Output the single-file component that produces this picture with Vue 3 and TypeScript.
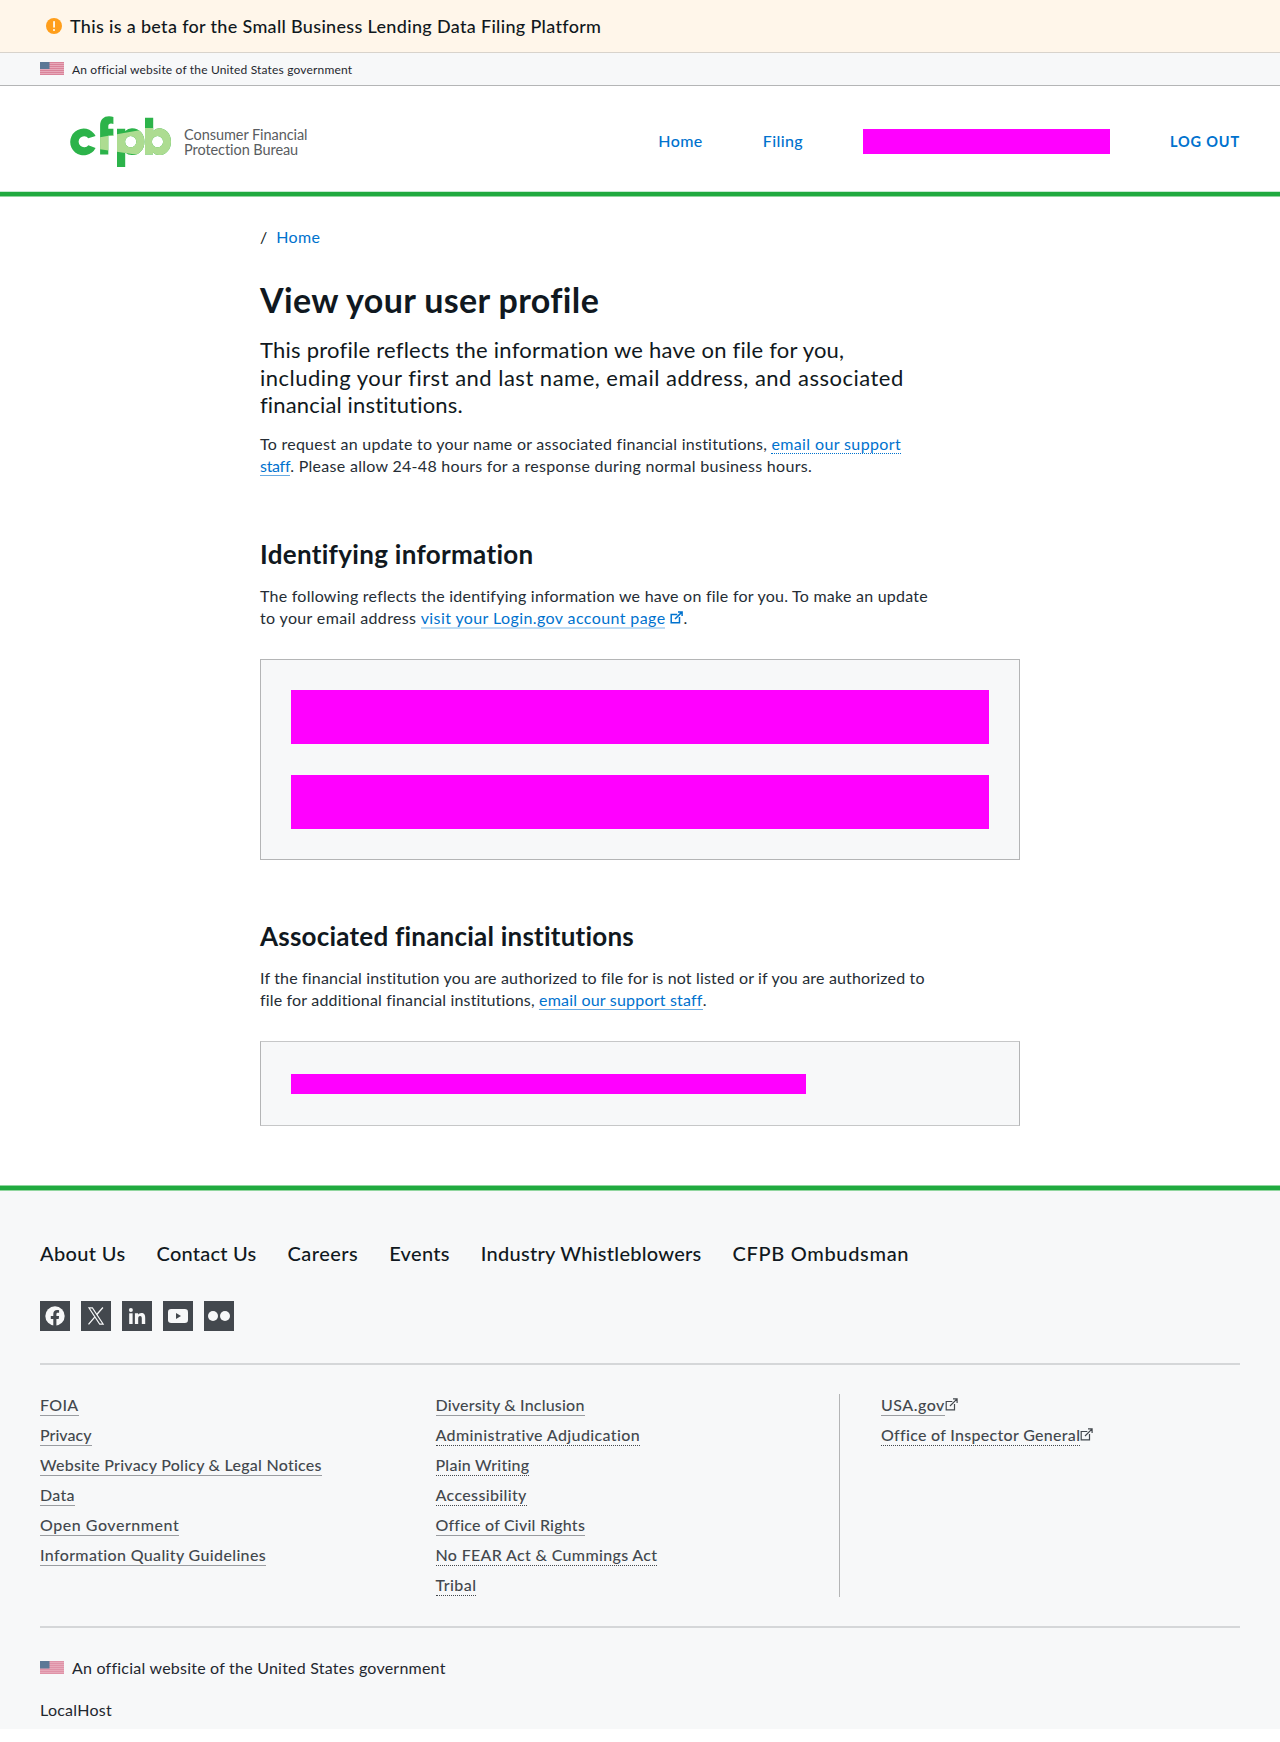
<script setup lang="ts">
interface Item {
  label: string
  track: number
  soft?: boolean
}

interface Column {
  name: string
  external?: boolean
  links: Item[]
}

const spacing = (track: number) => ({ letterSpacing: `${track}px` })

const lead: Item[] = [
  { label: 'This profile reflects the information we have on file for you,', track: 0.24 },
  { label: 'including your first and last name, email address, and associated', track: 0.49 },
  { label: 'financial institutions.', track: 0.16 },
]

const footerNav: Item[] = [
  { label: 'About Us', track: 0.36 },
  { label: 'Contact Us', track: 0.24 },
  { label: 'Careers', track: 0.46 },
  { label: 'Events', track: 0.3 },
  { label: 'Industry Whistleblowers', track: 0.27 },
  { label: 'CFPB Ombudsman', track: 0.67 },
]

const columns: Column[] = [
  {
    name: 'policies',
    links: [
      { label: 'FOIA', track: 0.32, soft: true },
      { label: 'Privacy', track: 0.02, soft: true },
      { label: 'Website Privacy Policy & Legal Notices', track: 0.245, soft: true },
      { label: 'Data', track: 0.27, soft: true },
      { label: 'Open Government', track: 0.53, soft: true },
      { label: 'Information Quality Guidelines', track: 0.35, soft: true },
    ],
  },
  {
    name: 'compliance',
    links: [
      { label: 'Diversity & Inclusion', track: 0.19, soft: true },
      { label: 'Administrative Adjudication', track: 0.37 },
      { label: 'Plain Writing', track: 0.23 },
      { label: 'Accessibility', track: 0.35 },
      { label: 'Office of Civil Rights', track: 0.22, soft: true },
      { label: 'No FEAR Act & Cummings Act', track: 0.33 },
      { label: 'Tribal', track: 0.44 },
    ],
  },
  {
    name: 'government',
    external: true,
    links: [
      { label: 'USA.gov', track: 0.5, soft: true },
      { label: 'Office of Inspector General', track: 0.3 },
    ],
  },
]

const stripes = [0, 2, 4, 6, 8, 10, 12]
</script>

<template>
  <div class="page">
    <div class="beta">
      <svg class="beta-icon" viewBox="0 0 16 16" aria-hidden="true">
        <circle cx="8" cy="8" r="8" fill="#ff9e1b" />
        <rect x="7.2" y="3" width="1.7" height="6.8" rx=".8" fill="#fff" />
        <circle cx="8" cy="12.1" r="1" fill="#fff" />
      </svg>
      <span>This is a beta for the Small Business Lending Data Filing Platform</span>
    </div>

    <div class="gov gov-top">
      <svg class="flag" viewBox="0 0 24 13" aria-hidden="true">
        <rect width="24" height="13" fill="#e7a9ba" />
        <rect v-for="y in stripes" :key="y" :y="y" width="24" height="1" fill="#d98399" />
        <rect width="9.5" height="7" fill="#5c7896" />
      </svg>
      <span>An official website of the United States government</span>
    </div>

    <header class="header">
      <a class="brand" aria-label="Consumer Financial Protection Bureau">
        <svg class="mark" viewBox="0 0 102 52" aria-hidden="true">
          <defs>
            <clipPath id="beam">
              <path d="M30 21.3 75 13.2V12h27v28H75.500L30 33.300z" />
            </clipPath>
            <g id="shapes">
              <path
                d="M38.300 38.500h-8.200V10C30.100 3.600 33.600.3 39 .3c1.700 0 3.100.2 4.400.7v6.900c-.8-.3-1.500-.5-2.300-.5-1.900 0-2.800.9-2.800 2.800v2.600h5.100v6.900h-5.100z"
              />
              <path
                fill-rule="evenodd"
                d="M47 12.800h8.200v2.300a9.500 9.500 0 0 1 7-2.800c7 0 12.300 5.600 12.300 13.400S69.200 39.100 62.200 39.100a9.500 9.500 0 0 1-7-2.600v14.400H47zM60.700 20.100a5.500 5.500 0 1 0 0 11.200 5.500 5.500 0 0 0 0-11.200z"
              />
              <path
                fill-rule="evenodd"
                d="M75 1.700h8.200v13.200a9.600 9.600 0 0 1 5.700-2.600c7 0 12.100 5.600 12.100 13.400s-5.100 13.400-12.100 13.400a9 9 0 0 1-5.900-2.700v2.100h-8zM87.500 20.100a5.500 5.500 0 1 0 0 11.200 5.500 5.500 0 0 0 0-11.200z"
              />
            </g>
          </defs>
          <path
            fill="#2cb34a"
            d="M25.600 20 18.300 22.200a5.500 5.500 0 1 0 .1 7l7.200 2.700A13.400 13.400 0 1 1 25.600 20z"
          />
          <use href="#shapes" fill="#2cb34a" />
          <use href="#shapes" fill="#addc91" clip-path="url(#beam)" />
        </svg>
        <span class="brand-text">
          <span class="brand-one">Consumer Financial</span>
          <span class="brand-two">Protection Bureau</span>
        </span>
      </a>
      <nav class="nav">
        <a>Home</a>
        <a>Filing</a>
        <span class="mask nav-mask"></span>
        <a class="logout">LOG OUT</a>
      </nav>
    </header>

    <main class="main">
      <div class="crumbs"><span>/</span><a>Home</a></div>

      <h1>View your user profile</h1>
      <p class="lead">
        <span v-for="line in lead" :key="line.label" :style="spacing(line.track)">{{ line.label }}</span>
      </p>
      <p class="copy after-lead">
        To request an update to your name or associated financial institutions,
        <a class="link wide">email our support</a><br />
        <a class="link soft tight">staff</a><span class="hours">. Please allow 24-48 hours for a response during normal business hours.</span>
      </p>

      <h2 class="first">Identifying information</h2>
      <p class="copy identity">
        The following reflects the identifying information we have on file for you. To make an update<br />
        <span class="address">to your email address</span>&#32;<a class="link faint">visit your Login.gov account page</a>
        <svg class="out" viewBox="0 0 13 13" aria-hidden="true">
          <path d="M7.300 3.500H1.200v8.300h8.300V6M8 .9h4.100V5M11.900 1.100 5 8" />
        </svg>.
      </p>
      <section class="well">
        <div class="mask row"></div>
        <div class="mask row"></div>
      </section>

      <h2 class="second">Associated financial institutions</h2>
      <p class="copy institutions">
        If the financial institution you are authorized to file for is not listed or if you are authorized to<br />
        file for additional financial institutions, <a class="link soft staff">email our support staff</a>.
      </p>
      <section class="well short">
        <div class="mask entry"></div>
      </section>
    </main>

    <footer class="footer">
      <nav class="footer-nav">
        <a v-for="item in footerNav" :key="item.label" :style="spacing(item.track)">{{ item.label }}</a>
      </nav>

      <div class="social">
        <svg viewBox="0 0 30 30" aria-label="Facebook">
          <rect width="30" height="30" fill="#43484e" />
          <circle cx="15" cy="15" r="9.700" fill="#f7f8f9" />
          <path
            fill="#43484e"
            d="M13.300 25v-6.900h-2.500v-3h2.500v-2.200c0-2.600 1.500-3.900 3.800-3.900 1 0 2 .2 2 .2v2.500h-1.200c-1.200 0-1.500.7-1.500 1.500v1.900h2.700l-.4 3h-2.300V25z"
          />
        </svg>
        <svg viewBox="0 0 30 30" aria-label="X">
          <rect width="30" height="30" fill="#43484e" />
          <g fill="none" stroke="#f7f8f9">
            <path stroke-width="1.100" d="M7.900 6.900h3.500l10.800 16.200h-3.500z" />
            <path stroke-width="1.300" d="m21.900 6.500-6.300 7.200M13.700 16.200l-6.200 7.200" />
          </g>
        </svg>
        <svg viewBox="0 0 30 30" aria-label="LinkedIn">
          <rect width="30" height="30" fill="#43484e" />
          <g fill="#f7f8f9">
            <circle cx="8.900" cy="9" r="2" />
            <rect x="7.200" y="12.300" width="3.400" height="10.700" />
            <path
              d="M12.900 12.300h3.200v1.500c.6-1 1.700-1.800 3.200-1.800 3 0 3.900 1.900 3.900 4.900V23h-3.400v-5.400c0-1.500-.2-2.700-1.700-2.700s-1.900 1.200-1.900 2.700V23h-3.300z"
            />
          </g>
        </svg>
        <svg viewBox="0 0 30 30" aria-label="YouTube">
          <rect width="30" height="30" fill="#43484e" />
          <rect x="5" y="8" width="20" height="14" rx="3.200" fill="#f7f8f9" />
          <path d="M13 12v6l5-3z" fill="#43484e" />
        </svg>
        <svg viewBox="0 0 30 30" aria-label="Flickr">
          <rect width="30" height="30" fill="#43484e" />
          <circle cx="9" cy="15" r="5" fill="#f7f8f9" />
          <circle cx="21" cy="15" r="5" fill="#f7f8f9" />
        </svg>
      </div>

      <div class="columns">
        <ul v-for="column in columns" :key="column.name" :class="column.name">
          <li v-for="item in column.links" :key="item.label">
            <a :class="{ soft: item.soft }" :style="spacing(item.track)">{{ item.label }}</a>
            <svg v-if="column.external" class="out" viewBox="0 0 13 13" aria-hidden="true">
              <path d="M7.300 3.500H1.200v8.300h8.300V6M8 .9h4.100V5M11.900 1.100 5 8" />
            </svg>
          </li>
        </ul>
      </div>

      <div class="gov gov-bottom">
        <svg class="flag" viewBox="0 0 24 13" aria-hidden="true">
          <rect width="24" height="13" fill="#e7a9ba" />
          <rect v-for="y in stripes" :key="y" :y="y" width="24" height="1" fill="#df92a7" />
          <rect width="9.5" height="7.500" fill="#5c7896" />
        </svg>
        <span>An official website of the United States government</span>
      </div>
      <div class="host">LocalHost</div>
    </footer>
  </div>
</template>

<style>
body {
  background: #fff;
}
</style>

<style scoped>
.page {
  font-family: Lato, "Open Sans", sans-serif;
  font-size: 16px;
  line-height: 22px;
  color: #101820;
}

h1,
h2,
p,
ul {
  margin: 0;
  padding: 0;
}

.beta {
  display: flex;
  align-items: center;
  gap: 8.500px;
  height: 52px;
  padding-left: 45.500px;
  border-bottom: 1px solid #d8d3cc;
  background: #fff6ea;
  font-size: 18px;
  font-weight: 500;
  letter-spacing: 0.325px;
}

.beta-icon {
  width: 16px;
  height: 16px;
}

.gov {
  display: flex;
  gap: 8px;
}

.gov-top {
  align-items: center;
  height: 32px;
  padding-left: 40px;
  border-bottom: 1px solid #b4b5b6;
  background: #f7f8f9;
  color: #1f272f;
  font-size: 12px;
  letter-spacing: 0.168px;
}

.gov-top span {
  padding-top: 2px;
}

.flag {
  flex: none;
  width: 24px;
  height: 13px;
}

.gov-top .flag {
  margin-top: -1px;
}

.header {
  display: flex;
  justify-content: space-between;
  height: 105px;
  padding: 0 40px 5px 70px;
  border-bottom: 1px solid #90d69f;
  background: linear-gradient(#c4ead0, #c4ead0) bottom 4px left / 100% 1px no-repeat,
    linear-gradient(#20aa3f, #20aa3f) bottom / 100% 4px no-repeat;
}

.brand {
  display: flex;
  gap: 12px;
  padding-top: 30px;
}

.mark {
  width: 102px;
  height: 52px;
}

.brand-text {
  display: flex;
  flex-direction: column;
  padding-top: 12px;
  color: #5a5d61;
  font-size: 14.500px;
  line-height: 14.500px;
}

.brand-one {
  letter-spacing: -0.06px;
}

.brand-two {
  letter-spacing: -0.07px;
}

.nav {
  display: flex;
  align-items: center;
  gap: 60px;
  height: 109px;
  color: #0072ce;
  font-weight: 500;
  letter-spacing: 0.4px;
}

.logout {
  padding-top: 2px;
  font-size: 14.500px;
  font-weight: 700;
  letter-spacing: 0.83px;
}

.mask {
  background: #f0f;
}

.nav-mask {
  width: 247px;
  height: 25px;
  margin-top: 2px;
}

.main {
  width: 760px;
  margin: 0 auto;
  padding: 29px 0 59px;
}

.crumbs {
  display: flex;
  gap: 8.500px;
  letter-spacing: 0.4px;
}

.crumbs a {
  color: #0072ce;
}

h1 {
  margin-top: 31px;
  font-size: 34px;
  line-height: 42px;
  font-weight: 700;
  letter-spacing: 0.37px;
}

h2 {
  font-size: 26px;
  line-height: 32px;
  font-weight: 700;
  letter-spacing: 0.22px;
}

.first {
  margin-top: 61px;
  letter-spacing: 0.31px;
}

.second {
  margin-top: 60px;
}

.lead {
  display: flex;
  flex-direction: column;
  margin-top: 15px;
  font-size: 22px;
  line-height: 27.500px;
}

.copy {
  margin-top: 15px;
  color: #252d35;
  white-space: nowrap;
  letter-spacing: 0.255px;
}

.after-lead {
  margin-top: 14.500px;
}

.identity {
  letter-spacing: 0.24px;
}

.address {
  letter-spacing: 0.35px;
}

.institutions {
  letter-spacing: 0.168px;
}

.link {
  border-bottom: 1px dotted #0072ce;
  color: #0072ce;
}

.link.wide {
  letter-spacing: 0.38px;
}

.link.soft {
  border-bottom: 1px solid #66aae2;
}

.link.tight {
  letter-spacing: -0.3px;
}

.link.staff {
  letter-spacing: 0.2px;
}

.hours {
  letter-spacing: 0.29px;
}

.link.faint {
  border-bottom: 2px solid #bfdcf3;
  letter-spacing: 0.4px;
}

.out {
  width: 13px;
  height: 13px;
  fill: none;
  stroke: currentColor;
  stroke-width: 1.200;
}

.copy .out {
  margin-left: 5px;
  color: #0072ce;
  stroke-width: 1.500;
}

.well {
  display: flex;
  flex-direction: column;
  gap: 30.500px;
  margin-top: 30px;
  padding: 30px;
  border: 1px solid #b4b5b6;
  background: #f7f8f9;
}

.row {
  height: 54.250px;
}

.short {
  padding: 32px 30px 31px;
  border-top-color: #c6c7c8;
  border-bottom-color: #c6c7c8;
}

.entry {
  width: 514.500px;
  height: 20px;
}

.footer {
  padding: 56px 40px 8px;
  background: linear-gradient(#90d69f, #90d69f) top / 100% 1px no-repeat,
    linear-gradient(#20aa3f, #20aa3f) top 1px left / 100% 4px no-repeat,
    linear-gradient(#90d69f, #90d69f) top 5px left / 100% 1px no-repeat, #f7f8f9;
}

.footer-nav {
  display: flex;
  gap: 31px;
  font-size: 20px;
  line-height: 25px;
  font-weight: 500;
}

.social {
  display: flex;
  gap: 11px;
  margin-top: 35px;
}

.social svg {
  width: 30px;
  height: 30px;
}

.columns {
  display: grid;
  grid-template-columns: 395.500px 403.500px 1fr;
  margin-top: 32px;
  padding: 29px 0;
  border-top: 2px solid #d5d7d9;
  border-bottom: 2px solid #d5d7d9;
  color: #43484e;
  font-weight: 500;
}

.columns ul {
  display: flex;
  flex-direction: column;
  gap: 10px;
  height: 202px;
  padding-top: 1px;
  list-style: none;
}

.columns li {
  display: flex;
  line-height: 20px;
  height: 20px;
}

.columns a {
  height: 20px;
  border-bottom: 1px dotted #43484e;
}

.columns a.soft {
  border-bottom: 1px solid #9a9da1;
}

.columns .out {
  margin-top: 3px;
}

.columns .government {
  padding-left: 41px;
  border-left: 1px solid #b4b5b6;
}

.gov-bottom {
  margin-top: 29px;
  color: #1f272f;
  letter-spacing: 0.225px;
}

.gov-bottom .flag {
  margin-top: 4px;
}

.host {
  margin-top: 20px;
  color: #1f272f;
  letter-spacing: 0.26px;
}
</style>
